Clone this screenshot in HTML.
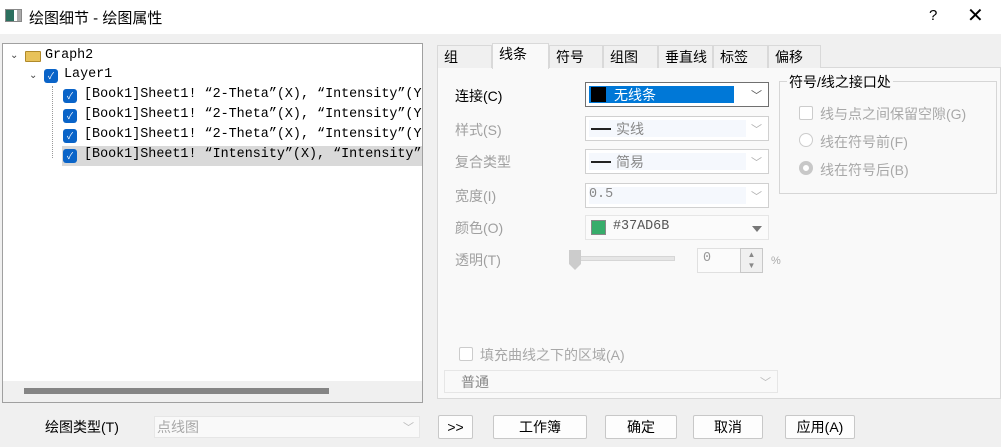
<!DOCTYPE html>
<html><head><meta charset="utf-8"><style>
*{box-sizing:border-box;margin:0;padding:0}
body{width:1001px;height:447px;background:#f0f0f0;position:relative;overflow:hidden;font-family:"Liberation Sans","Noto Sans CJK SC",sans-serif;font-size:14px;color:#000}
.a{position:absolute}
.mono{font-family:"Liberation Mono","Noto Sans CJK SC",monospace;font-size:13.4px;white-space:nowrap}
.cb{position:absolute;width:14px;height:14px;background:#0a64c8;border-radius:3px;color:#fff;font-size:9px;line-height:14px;text-align:center}
.tab{position:absolute;top:45px;height:23px;border:1px solid #d9d9d9;border-bottom:none;background:#f0f0f0;font-size:14px;padding:1px 0 0 6px}
.lbl{position:absolute;left:455px;color:#a0a0a0;font-size:14px}
.combo{position:absolute;left:585px;width:184px;height:25px;border:1px solid #d0d0d0;background:#fff}
.combo .in{position:absolute;left:3px;top:3px;right:22px;bottom:3px;background:#f5f8fd}
.arr{position:absolute;right:6px;top:4px;color:#b0b0b0;font-size:11px}
.btn{position:absolute;top:415px;height:24px;border:1px solid #c8c8c8;background:#fdfdfd;border-radius:2px;text-align:center;line-height:22px;font-size:14px}
.gray{color:#a8a8a8}
</style></head><body>
<div class="a" style="left:0;top:0;width:1001px;height:34px;background:#fff"></div>
<div class="a" style="left:5px;top:9px;width:17px;height:13px;border:1px solid #888;background:linear-gradient(90deg,#2b6f5e 0 55%,#fff 55% 75%,#aaa 75%)"></div>
<div class="a" style="left:29px;top:7px;font-size:15px">绘图细节 - 绘图属性</div>
<div class="a" style="left:929px;top:7px;font-size:15px">?</div>
<div class="a" style="left:967px;top:3px;font-size:20px;font-weight:200">✕</div>

<div class="a" style="left:2px;top:43px;width:421px;height:360px;background:#fff;border:1px solid #a0a0a0;overflow:hidden">
<div class="a" style="left:0;top:337px;width:419px;height:21px;background:#f0f0f0"></div>
<div class="a" style="left:21px;top:344px;width:305px;height:6px;background:#858585"></div>
<div class="a" style="left:59px;top:102px;width:360px;height:20px;background:#d9d9d9"></div>
<div class="a" style="left:7px;top:6px;font-size:10px;color:#444">⌄</div>
<div class="a" style="left:22px;top:7px;width:16px;height:11px;background:#e8c25a;border:1px solid #b08a2a;border-radius:1px"></div>
<div class="a mono" style="left:42px;top:4px">Graph2</div>
<div class="a" style="left:26px;top:26px;font-size:10px;color:#444">⌄</div>
<div class="cb" style="left:41px;top:25px">✓</div>
<div class="a mono" style="left:61px;top:23px">Layer1</div>
<div class="a" style="left:49px;top:42px;width:1px;height:72px;border-left:1px dotted #999"></div>
<div class="cb" style="left:60px;top:45px">✓</div><div class="a mono" style="left:81px;top:43px">[Book1]Sheet1! “2-Theta”(X), “Intensity”(Y)</div>
<div class="cb" style="left:60px;top:65px">✓</div><div class="a mono" style="left:81px;top:63px">[Book1]Sheet1! “2-Theta”(X), “Intensity”(Y)</div>
<div class="cb" style="left:60px;top:85px">✓</div><div class="a mono" style="left:81px;top:83px">[Book1]Sheet1! “2-Theta”(X), “Intensity”(Y)</div>
<div class="cb" style="left:60px;top:105px">✓</div><div class="a mono" style="left:81px;top:103px">[Book1]Sheet1! “Intensity”(X), “Intensity”</div>
</div>

<div class="a" style="left:437px;top:67px;width:564px;height:332px;background:#f9f9f9;border:1px solid #d9d9d9"></div>
<div class="tab" style="left:437px;width:55px">组</div>
<div class="tab" style="left:549px;width:54px">符号</div>
<div class="tab" style="left:603px;width:55px">组图</div>
<div class="tab" style="left:658px;width:55px">垂直线</div>
<div class="tab" style="left:713px;width:55px">标签</div>
<div class="tab" style="left:768px;width:53px">偏移</div>
<div class="tab" style="left:492px;top:43px;width:57px;height:26px;background:#f9f9f9;padding-top:0">线条</div>

<div class="lbl" style="top:86px;color:#000">连接(C)</div>
<div class="combo" style="top:82px;border-color:#707070"><div class="a" style="left:3px;top:3px;width:145px;height:17px;background:#0078d7"></div><div class="a" style="left:5px;top:4px;width:15px;height:15px;background:#000"></div><div class="a" style="left:28px;top:2px;color:#fff">无线条</div><span class="arr" style="color:#555">﹀</span></div>
<div class="lbl" style="top:120px">样式(S)</div>
<div class="combo" style="top:116px"><div class="in"></div><div class="a" style="left:5px;top:11px;width:20px;height:2px;background:#222"></div><div class="a" style="left:30px;top:2px;color:#888">实线</div><span class="arr">﹀</span></div>
<div class="lbl" style="top:152px">复合类型</div>
<div class="combo" style="top:149px"><div class="in"></div><div class="a" style="left:5px;top:11px;width:20px;height:2px;background:#222"></div><div class="a" style="left:30px;top:2px;color:#888">简易</div><span class="arr">﹀</span></div>
<div class="lbl" style="top:186px">宽度(I)</div>
<div class="combo" style="top:183px"><div class="in"></div><div class="a mono" style="left:3px;top:3px;color:#888">0.5</div><span class="arr">﹀</span></div>
<div class="lbl" style="top:218px">颜色(O)</div>
<div class="combo" style="top:215px;border-color:#e6e6e6;background:#fbfbfb"><div class="a" style="left:5px;top:4px;width:15px;height:15px;background:#37ad6b;border:1px solid #888"></div><div class="a mono" style="left:27px;top:3px;color:#555">#37AD6B</div><div class="a" style="right:6px;top:10px;border:5px solid transparent;border-top:6px solid #777"></div></div>
<div class="lbl" style="top:250px">透明(T)</div>
<div class="a" style="left:570px;top:256px;width:105px;height:5px;background:#e6e6e6;border:1px solid #d6d6d6"></div>
<div class="a" style="left:569px;top:250px;width:12px;height:20px;background:#ccc;clip-path:polygon(0 0,100% 0,100% 70%,50% 100%,0 70%)"></div>
<div class="a" style="left:697px;top:248px;width:66px;height:25px;border:1px solid #e0e0e0;background:#fbfbfb"></div>
<div class="a mono" style="left:703px;top:251px;color:#999">0</div>
<div class="a" style="left:740px;top:248px;width:23px;height:25px;border:1px solid #c8c8c8;background:#f0f0f0;font-size:8px;color:#888;text-align:center;line-height:11px">▲<br>▼</div>
<div class="a" style="left:771px;top:255px;color:#aaa;font-size:11px">%</div>

<div class="a" style="left:779px;top:81px;width:218px;height:113px;border:1px solid #d6d6d6"></div>
<div class="a" style="left:787px;top:72px;background:#f9f9f9;padding:0 2px">符号/线之接口处</div>
<div class="a" style="left:799px;top:106px;width:14px;height:14px;border:1px solid #ccc;border-radius:2px;background:#fff"></div>
<div class="a gray" style="left:820px;top:104px">线与点之间保留空隙(G)</div>
<div class="a" style="left:799px;top:133px;width:14px;height:14px;border:1px solid #ccc;border-radius:50%;background:#fff"></div>
<div class="a gray" style="left:820px;top:132px">线在符号前(F)</div>
<div class="a" style="left:799px;top:161px;width:14px;height:14px;border:4px solid #c8c8c8;border-radius:50%;background:#fff"></div>
<div class="a gray" style="left:820px;top:160px">线在符号后(B)</div>

<div class="a" style="left:459px;top:347px;width:14px;height:14px;border:1px solid #ccc;border-radius:2px;background:#fff"></div>
<div class="a gray" style="left:480px;top:345px">填充曲线之下的区域(A)</div>
<div class="a" style="left:444px;top:370px;width:334px;height:23px;border:1px solid #e6e6e6;background:#f9f9f9"></div>
<div class="a" style="left:461px;top:372px;color:#888">普通</div>
<div class="a" style="left:760px;top:374px;color:#bbb;font-size:11px">﹀</div>

<div class="a" style="left:45px;top:417px">绘图类型(T)</div>
<div class="a" style="left:154px;top:416px;width:266px;height:22px;border:1px solid #e6e6e6;background:#f9f9f9"></div>
<div class="a gray" style="left:157px;top:417px">点线图</div>
<div class="a" style="left:403px;top:419px;color:#bbb;font-size:11px">﹀</div>
<div class="btn" style="left:438px;width:35px">&gt;&gt;</div>
<div class="btn" style="left:493px;width:94px">工作簿</div>
<div class="btn" style="left:605px;width:72px">确定</div>
<div class="btn" style="left:693px;width:70px">取消</div>
<div class="btn" style="left:785px;width:70px">应用(A)</div>
</body></html>
